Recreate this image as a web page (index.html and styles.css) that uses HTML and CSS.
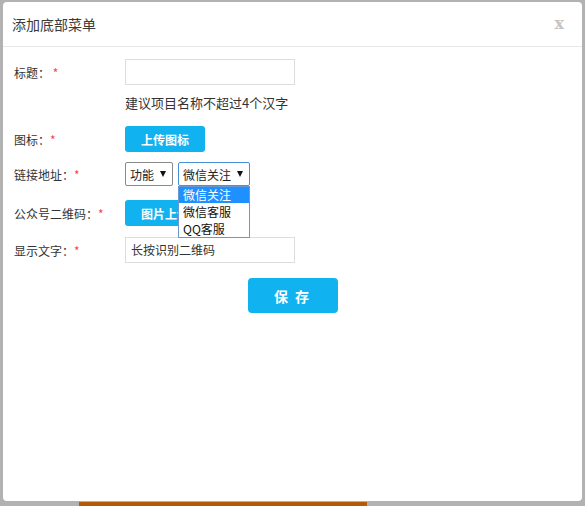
FILE: index.html
```html
<!DOCTYPE html>
<html lang="zh">
<head>
<meta charset="utf-8">
<link rel="stylesheet" href="styles.css">
</head>
<body>
<div class="page">
  <div class="backdrop-bar"></div>
  <div class="dialog">
    <div class="dialog-head">
      <span class="dialog-title">添加底部菜单</span>
      <span class="dialog-close">x</span>
    </div>
    <div class="dialog-body">
      <div class="row row-input">
        <label class="lbl">标题：&nbsp;<i class="req">*</i></label>
        <div class="field"><div class="text-input"></div></div>
      </div>
      <div class="row row-hint">
        <span class="lbl"></span>
        <div class="field hint">建议项目名称不超过4个汉字</div>
      </div>
      <div class="row row-btn">
        <label class="lbl">图标：<i class="req">*</i></label>
        <div class="field"><span class="btn">上传图标</span></div>
      </div>
      <div class="row row-select">
        <label class="lbl">链接地址：<i class="req">*</i></label>
        <div class="field selects">
          <span class="select select-type">功能<b class="caret"></b></span>
          <div class="select-wrap">
            <span class="select select-target focused">微信关注<b class="caret"></b></span>
            <ul class="options">
              <li class="active">微信关注</li>
              <li>微信客服</li>
              <li>QQ客服</li>
            </ul>
          </div>
        </div>
      </div>
      <div class="row row-qr">
        <label class="lbl">公众号二维码：<i class="req">*</i></label>
        <div class="field"><span class="btn">图片上传</span></div>
      </div>
      <div class="row row-text">
        <label class="lbl">显示文字：<i class="req">*</i></label>
        <div class="field"><div class="text-input">长按识别二维码</div></div>
      </div>
      <div class="actions"><span class="btn-save">保 存</span></div>
    </div>
  </div>
</div>
</body>
</html>
```
FILE: styles.css
```css
* { box-sizing: border-box; }
html, body { margin: 0; padding: 0; }
body {
  width: 585px;
  height: 506px;
  overflow: hidden;
  background: #b2b2b2;
  font-family: "Noto Sans CJK SC", "Noto Sans", sans-serif;
  color: #333;
}
.page {
  position: relative;
  width: 585px;
  height: 506px;
  padding: 2px 3px 0 3px;
}
.backdrop-bar {
  position: absolute;
  left: 79px;
  top: 502px;
  width: 288px;
  height: 4px;
  background: #b35a06;
}
.dialog {
  position: relative;
  width: 579px;
  height: 499px;
  background: #fff;
  border-radius: 4px;
}
.dialog-head {
  height: 45px;
  border-bottom: 1px solid #e8e8e8;
  display: flex;
  align-items: center;
  justify-content: space-between;
  padding: 0 18px 0 9px;
}
.dialog-title {
  font-size: 14px;
  color: #3a3a3a;
  margin-top: -1px;
}
.dialog-close {
  font-family: "DejaVu Serif", "Liberation Serif", serif;
  font-weight: bold;
  font-size: 16px;
  color: #c4c4c4;
  margin-top: -2px;
}
.dialog-body {
  padding: 12px 0 0 11px;
}
.row {
  display: grid;
  grid-template-columns: 111px 1fr;
  align-items: center;
}
.field { display: flex; align-items: center; }
.lbl {
  font-size: 12px;
  line-height: 17px;
  color: #333;
  white-space: nowrap;
}
.req {
  font-style: normal;
  color: #f44;
  font-size: 12px;
}
.text-input {
  width: 170px;
  height: 26px;
  border: 1px solid #ddd;
  font-size: 12px;
  line-height: 24px;
  padding-left: 5px;
  color: #333;
}
.row-hint { margin-top: 9px; height: 18px; }
.hint { font-size: 13px; line-height: 18px; color: #333; }
.row-btn { margin-top: 14px; }
.btn {
  display: flex;
  align-items: center;
  justify-content: center;
  width: 80px;
  height: 26px;
  background: #10b3ef;
  color: #fff;
  font-size: 12px;
  font-weight: bold;
  border-radius: 3px;
}
.row-select { margin-top: 10px; }
.selects { gap: 5px; }
.select {
  display: flex;
  align-items: center;
  white-space: nowrap;
  height: 24px;
  padding: 0 4px 0 4px;
  border: 1px solid #8a8a8a;
  border-radius: 2px;
  font-size: 12px;
  color: #222;
  background: #fff;
}
.select-type { width: 48px; }
.select-target { width: 72px; }
.select.focused { border-color: #4a90d9; }
.caret {
  display: block;
  width: 0;
  height: 0;
  margin-left: 6px;
  border-left: 3.5px solid transparent;
  border-right: 3.5px solid transparent;
  border-top: 6px solid #111;
}
.select-wrap { position: relative; display: flex; }
.options {
  position: absolute;
  left: 0;
  top: 24px;
  width: 100%;
  margin: 0;
  padding: 0;
  list-style: none;
  border: 1px solid #6c97d0;
  background: #fff;
  z-index: 5;
}
.options li {
  font-size: 12px;
  line-height: 17px;
  height: 17px;
  padding-left: 4px;
  color: #111;
  white-space: nowrap;
}
.options li.active { background: #1e90ff; color: #fff; height: 16px; line-height: 16px; }
.row-qr { margin-top: 14px; }
.row-text { margin-top: 11px; }
.actions {
  margin-top: 15px;
  display: flex;
  justify-content: center;
  padding-right: 11px;
}
.btn-save {
  display: flex;
  align-items: center;
  justify-content: center;
  width: 90px;
  height: 35px;
  background: #10b3ef;
  color: #fff;
  font-size: 14px;
  font-weight: bold;
  letter-spacing: 2px;
  border-radius: 4px;
}
```
